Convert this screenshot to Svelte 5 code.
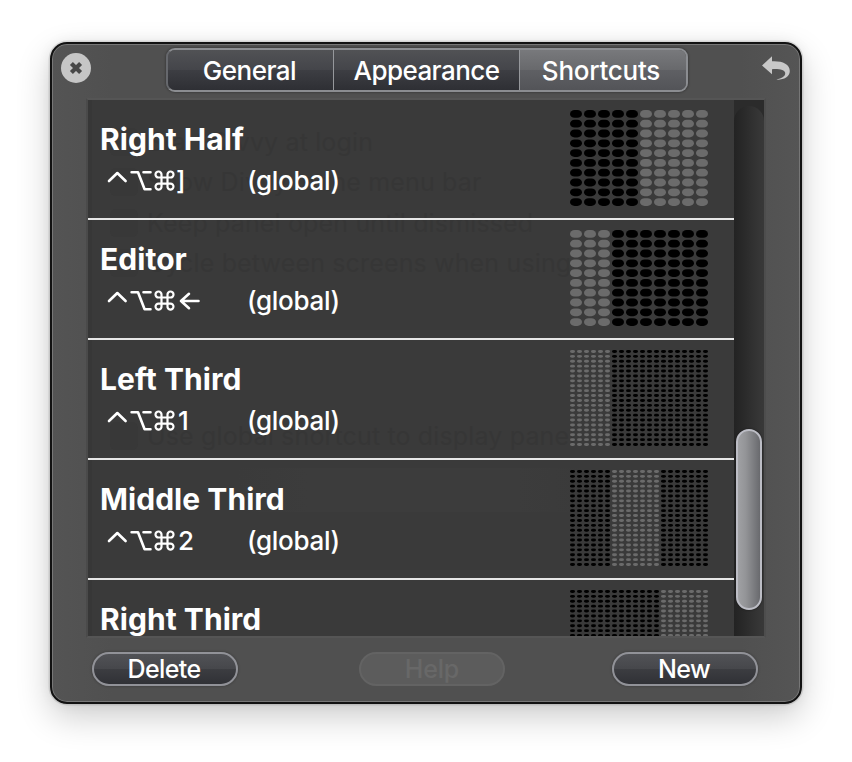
<script>
  const tabs = ['General', 'Appearance', 'Shortcuts'];
  const shortcuts = [
    { name: 'Right Half', key: ']', size: 10, from: 5, to: 10 },
    { name: 'Editor', key: '←', size: 10, from: 0, to: 3 },
    { name: 'Left Third', key: '1', size: 20, from: 0, to: 6 },
    { name: 'Middle Third', key: '2', size: 20, from: 6, to: 13 },
    { name: 'Right Third', key: '3', size: 20, from: 13, to: 20 }
  ];
  const ghosts = [
    { text: 'Start Divvy at login', top: 26 },
    { text: 'Show Divvy in the menu bar', top: 66 },
    { text: 'Keep panel open until dismissed', top: 107 },
    { text: 'Cycle between screens when using', top: 147 },
    { text: 'Use global shortcut to display panel', top: 320 }
  ];
  const range = (n) => Array.from({ length: n }, (_, i) => i);
</script>

<div class="stage">
  <div class="window">
    <header>
      <svg class="close" viewBox="0 0 30 30">
        <circle cx="15" cy="15" r="15" fill="#c6c6c6" />
        <path d="M10.4 10.4L19.6 19.6M19.6 10.4L10.4 19.6" stroke="#484848" stroke-width="4.2" />
      </svg>
      <nav>
        {#each tabs as tab, i}
          <div class="tab t{i}" class:active={i === 2}><span>{tab}</span></div>
        {/each}
      </nav>
      <svg class="undo" viewBox="0 0 28 25">
        <path d="M0 9.5L10 .3V5.3C20 4.8 27.8 8 27.8 15C27.8 21 21 24.2 14.2 23.6C20 22.5 23.6 20 23.2 17C22.8 14 17.5 12.7 10 13.2V18.3Z" fill="#c8c8c8" />
      </svg>
    </header>

    <div class="frame">
      <div class="list">
        {#each ghosts as g}
          <div class="ghost" style="top: {g.top}px"><i></i><span>{g.text}</span></div>
        {/each}
        <div class="band"></div>
        {#each shortcuts as s}
          <div class="row">
            <div class="info">
              <div class="name"><span>{s.name}</span></div>
              {#if s.name !== 'Right Third'}
              <div class="combo">
                <span class="keys"><svg viewBox="0 0 72 26">
                    <g fill="none" stroke="#fff" stroke-width="2.6" stroke-linecap="round" stroke-linejoin="round">
                      <path d="M3 13L11.3 5L19.6 13" />
                      <path d="M25.6 4.2H32L38.6 21.2H44.5M37.5 4.2H44.5" />
                      <path stroke-width="2.2" d="M55.5 9.2V6.6A3 3 0 1 0 52.5 9.5H64.5A3 3 0 1 0 61.5 6.6V18.2A3 3 0 1 0 64.5 15.6H52.5A3 3 0 1 0 55.5 18.2Z" />
                    </g>
                  </svg>{#if s.key === '←'}<svg class="arrow" viewBox="0 0 24 26"><path d="M3 13H20.5M11 5.8L3 13L11 20.2" fill="none" stroke="#fff" stroke-width="2.6" stroke-linecap="round" stroke-linejoin="round" /></svg>{:else}<b class:bracket={s.key === ']'}>{s.key}</b>{/if}</span>
                <span class="scope">(global)</span>
              </div>
              {/if}
            </div>
            <svg class="grid" viewBox="0 0 138 96">
              {#each range(s.size) as y}
                {#each range(s.size) as x}
                  <rect
                    x={(x * 140) / s.size}
                    y={(y * 98) / s.size}
                    width={140 / s.size - 2}
                    height={98 / s.size - 2}
                    rx={s.size === 10 ? 4.6 : 2}
                    ry={s.size === 10 ? 3.9 : 1.45}
                    fill={x >= s.from && x < s.to ? '#6b6b6b' : '#000'}
                  />
                {/each}
              {/each}
            </svg>
          </div>
        {/each}
      </div>
      <div class="track"><div class="groove"><div class="thumb"></div></div></div>
    </div>

    <footer>
      <div class="btn"><span>Delete</span></div>
      <div class="btn off"><span>Help</span></div>
      <div class="btn new"><span>New</span></div>
    </footer>
  </div>
</div>

<style>
  :global(body) { background: #fff; }
  .stage {
    box-sizing: border-box; width: 852px; height: 762px; padding: 42px 50px; overflow: hidden;
    font-family: Inter, 'Liberation Sans', sans-serif; color: #fff;
  }
  .window {
    box-sizing: border-box; width: 752px; height: 662px; border: 2px solid #121212; border-radius: 17px;
    background: linear-gradient(90deg, #545454, #505050 8%, #505050 92%, #555);
    box-shadow: inset 0 0 0 1px #777, 0 0 0 1.5px rgba(0,0,0,.1), 0 13px 34px rgba(0,0,0,.2), 0 0 14px rgba(0,0,0,.06);
    display: flex; flex-direction: column;
  }
  header { height: 54px; display: flex; align-items: flex-start; }
  .close { width: 30px; height: 30px; margin: 9px 0 0 9px; }
  nav {
    box-sizing: border-box; display: flex; width: 522px; height: 44px; margin: 4px 0 0 75px;
    border: 2px solid #8b8d91; border-left-color: #66686d; border-radius: 9px; overflow: hidden;
    box-shadow: 0 0 2px 1px rgba(0,0,0,.22);
  }
  .tab {
    flex: none; box-sizing: border-box; display: flex; justify-content: center; align-items: center;
    font-size: 26px; font-weight: 500; border-right: 1px solid #96989c; white-space: nowrap;
    background: linear-gradient(#515255, #44454a 50%, #3d3e43 50%, #2e2f34);
  }
  .t0 { width: 166px; letter-spacing: -.5px; }
  .t1 { width: 186px; letter-spacing: -.55px; }
  .t2 { flex: 1; border: 0; letter-spacing: -.25px; }
  .t2 span { margin-right: 4px; }
  .t0 span { margin-right: 2px; }
  .active { background: linear-gradient(#78797c, #68696c 50%, #5f6064 50%, #535458); }
  .undo { width: 28px; height: 25px; margin: 12px 0 0 74px; }

  .frame {
    box-sizing: border-box; display: flex; width: 680px; height: 540px; margin-left: 34px;
    border: 2px solid #555; border-left-color: #4a4a4a; border-right-color: #4d4d4d;
  }
  .list {
    position: relative; width: 646px; height: 536px; overflow: hidden;
    background: #3a3a3a; box-shadow: inset 4px 0 #373737;
  }
  .row {
    position: relative; box-sizing: border-box; height: 120px; display: flex; justify-content: space-between;
    padding: 10px 26px 0 12px; border-bottom: 2px solid #e6e6e6;
  }
  .name { height: 58px; line-height: 59px; font-size: 30px; font-weight: 700; letter-spacing: .05px; white-space: nowrap; }
  .combo { display: flex; height: 26px; line-height: 26px; font-size: 26px; font-weight: 450; margin-left: 6px; white-space: nowrap; }
  .keys { display: flex; width: 141px; }
  .keys svg { width: 72px; height: 26px; }
  .keys svg.arrow { width: 24px; }
  .keys b { font-weight: 450; }
  .keys b.bracket { margin-left: -2px; }
  .scope { letter-spacing: -.3px; }
  .grid { width: 138px; height: 96px; }
  .ghost {
    position: absolute; left: 22px; display: flex; align-items: center; height: 32px;
    font-size: 25px; color: #363636; white-space: nowrap; letter-spacing: .15px;
  }
  .ghost i { width: 28px; height: 28px; border-radius: 6px; background: #383838; margin-right: 9px; }
  .band { position: absolute; left: 150px; top: 368px; width: 350px; height: 44px; background: linear-gradient(90deg, #3a3a3a, #3c3c3c 20%, #3c3c3c 80%, #3a3a3a); }
  .track { box-sizing: border-box; width: 30px; height: 536px; padding-top: 6px; background: #2b2b2b; }
  .groove {
    box-sizing: border-box; height: 530px; padding: 323px 2.5px 0 1.5px; border-radius: 15px 15px 0 0;
    background: linear-gradient(90deg, #232323, #292929 30%, #363636 85%, #383838);
  }
  .thumb {
    box-sizing: border-box; height: 181px; border: 2px solid #bcbdc5; border-radius: 13px;
    background: linear-gradient(90deg, #a0a1a4, #939497 35%, #696a6e);
    box-shadow: 0 0 2px #161616;
  }

  footer { display: flex; margin: 14px 42px 0 40px; }
  .btn {
    box-sizing: border-box; width: 146px; height: 34px; border: 2px solid #919298; border-radius: 17px;
    display: flex; align-items: center; justify-content: center; font-size: 25px; font-weight: 500; letter-spacing: -.6px;
    background: linear-gradient(#515256, #46474b 50%, #3c3d41 50%, #303136);
    box-shadow: 0 0 2px 1px rgba(0,0,0,.15);
  }
  .btn:not(.off) span { margin-right: 2px; }
  .off { margin-left: 121px; letter-spacing: -.2px; color: #686868; border-color: #636363; background: #5c5c5c; box-shadow: none; }
  .new { margin-left: auto; }
</style>
